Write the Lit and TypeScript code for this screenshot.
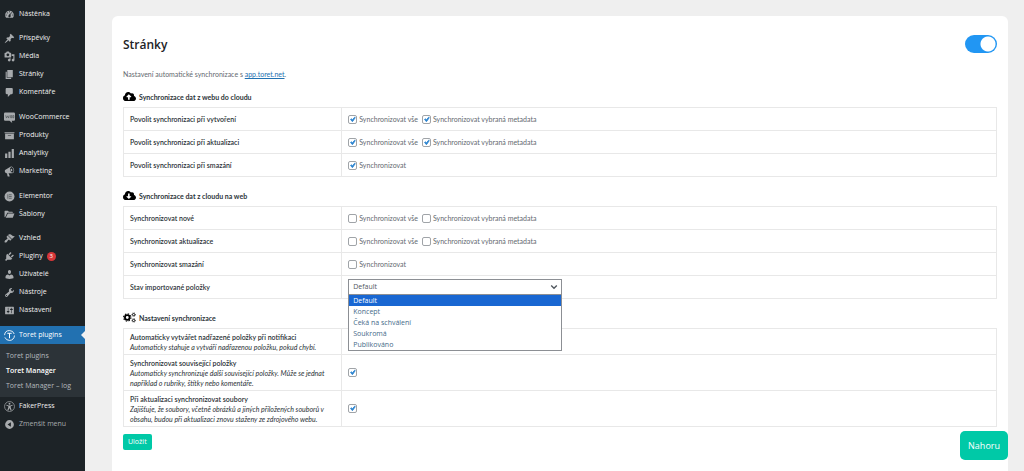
import { LitElement, html, css, svg, nothing } from "lit";
import { customElement, property } from "lit/decorators.js";
import { classMap } from "lit/directives/class-map.js";

const p = (d: string) => svg`<path fill-rule="evenodd" d=${d}></path>`;

const ICONS: Record<string, unknown> = {
  dashboard: p("M3.76 16h12.48c1.1-1.37 1.76-3.11 1.76-5 0-4.42-3.58-8-8-8s-8 3.58-8 8c0 1.89.66 3.63 1.76 5zM10 4c.55 0 1 .45 1 1s-.45 1-1 1-1-.45-1-1 .45-1 1-1zM6 6c.55 0 1 .45 1 1s-.45 1-1 1-1-.45-1-1 .45-1 1-1zm8 0c.55 0 1 .45 1 1s-.45 1-1 1-1-.45-1-1 .45-1 1-1zm-5.37 5.55L12 7v6c0 1.1-.9 2-2 2s-2-.9-2-2c0-.57.24-1.08.63-1.45zM4 10c.55 0 1 .45 1 1s-.45 1-1 1-1-.45-1-1 .45-1 1-1zm12 0c.55 0 1 .45 1 1s-.45 1-1 1-1-.45-1-1 .45-1 1-1z"),
  post: p("M10.44 3.02l1.82-1.82 6.36 6.35-1.83 1.82c-1.05-.68-2.48-.57-3.41.36l-.75.75c-.92.93-1.04 2.35-.35 3.41l-1.83 1.82-2.41-2.41-2.8 2.79c-.42.42-3.38 2.71-3.8 2.29s1.86-3.39 2.28-3.81l2.79-2.79L4.1 9.36l1.83-1.82c1.05.69 2.48.57 3.4-.36l.75-.75c.93-.92 1.05-2.35.36-3.41z"),
  media: p("M13 11V4c0-.55-.45-1-1-1h-1.67L9 1H5L3.67 3H2c-.55 0-1 .45-1 1v7c0 .55.45 1 1 1h10c.55 0 1-.45 1-1zM7 4.5c1.38 0 2.5 1.12 2.5 2.5S8.38 9.5 7 9.5 4.5 8.38 4.5 7 5.62 4.5 7 4.5zM14 6h5v10.5c0 1.38-1.12 2.5-2.5 2.5S14 17.88 14 16.5s1.12-2.5 2.5-2.5c.17 0 .34.02.5.05V9h-3V6zm-4 8.05V13h2v3.5c0 1.38-1.12 2.5-2.5 2.5S7 17.88 7 16.5 8.12 14 9.5 14c.17 0 .34.02.5.05z"),
  page: p("M6 15V2h10v13H6zm-1 1h8v2H3V5h2v11z"),
  comments: p("M5 2h9c1.1 0 2 .9 2 2v7c0 1.1-.9 2-2 2h-2l-5 5v-5H5c-1.1 0-2-.9-2-2V4c0-1.1.9-2 2-2z"),
  woo: svg`<path d="M2 1h16q2 0 2 2v11q0 2-2 2h-4l1 4-5-4H2q-2 0-2-2V3q0-2 2-2z"></path>
    <path d="M3 6l1.500 5L6.500 7l2 4L9.500 6M12 6.500h2v4h-2zM16 6.500h2v4h-2z" fill="none" stroke="#1d2327" stroke-width="1.200" opacity=".6"></path>`,
  archive: p("M19 4v2H1V4h18zM2 7h16v10H2V7zm11 3V9H7v1h6z"),
  chart: p("M18 18V2h-4v16h4zm-6 0V7H8v11h4zm-6 0v-8H2v8h4z"),
  megaphone: p("M18.15 5.94c.46 1.62.38 3.22-.02 4.48-.42 1.28-1.26 2.18-2.3 2.48-.16.06-.26.06-.4.06-.06.02-.12.02-.18.02-.06.02-.14.02-.22.02h-6.8l2.22 5.5c.02.14-.06.26-.14.34-.08.1-.24.16-.34.16H6.95c-.1 0-.26-.06-.34-.16-.08-.08-.16-.2-.14-.34l-1-5.5H4.25l-.02-.02c-.5.06-1.08-.18-1.54-.62s-.88-1.08-1.06-1.88c-.24-.8-.2-1.56-.02-2.2.18-.62.58-1.08 1.06-1.3l.02-.02 9-5.4c.1-.06.18-.1.24-.16.06-.04.14-.08.24-.12.16-.08.28-.12.5-.18 1.04-.3 2.24.1 3.22.98s1.84 2.24 2.26 3.86zm-2.580 5.980h-.02c.4-.1.74-.34 1.040-.7.58-.7.86-1.760.86-3.040 0-.64-.1-1.300-.28-1.980-.34-1.360-1.020-2.500-1.780-3.240s-1.680-1.100-2.460-.88c-.82.22-1.400.96-1.700 2-.32 1.040-.28 2.360.06 3.720.38 1.360 1 2.500 1.800 3.240.78.74 1.620 1.100 2.480.88zm-2.540-7.080c.22-.04.42-.02.62.04.38.16.76.48 1.020 1s.42 1.200.42 1.780c0 .3-.04.56-.12.8-.18.48-.44.84-.86.94-.34.1-.8-.06-1.140-.4s-.64-.86-.78-1.500c-.18-.62-.12-1.240.02-1.720s.48-.84.82-.94z"),
  elementor: svg`<circle cx="10" cy="10" r="9"></circle><path d="M7 6v8M9 6.800h5M9 10h5M9 13.200h5" fill="none" stroke="#1d2327" stroke-width="1.500" opacity=".6"></path>`,
  folder: p("M1 4q0-1 1-1h5l2 2h6q1 0 1 1v1H6L2.500 14 1 15zM7 8h12l-3 8H3z"),
  appearance: p("M14.48 11.06L7.41 3.99l1.5-1.5c.5-.56 2.3-.47 3.51.32 1.21.8 1.43 1.28 2.91 2.1 1.18.64 2.45 1.26 4.45.85zm-.71.71L6.7 4.7 4.93 6.47c-.39.39-.39 1.02 0 1.41l1.06 1.06c.39.39.39 1.03 0 1.42-.6.6-1.43 1.11-2.21 1.69-.35.26-.7.53-1.01.84C1.43 14.23.4 16.08 1.4 17.07c.99 1 2.84-.03 4.18-1.36.31-.31.58-.66.85-1.02.57-.78 1.08-1.61 1.69-2.21.39-.39 1.02-.39 1.41 0l1.06 1.06c.39.39 1.02.39 1.41 0z"),
  plugins: p("M13.11 4.36L9.87 7.6 8 5.73l3.24-3.24c.35-.34 1.05-.2 1.56.32.52.51.66 1.21.31 1.55zm-8 1.77l.91-1.12 9.01 9.01-1.19.84c-.71.71-2.63 1.16-3.82 1.16H6.14L4.9 17.26c-.59.59-1.54.59-2.12 0-.59-.58-.59-1.53 0-2.12l1.24-1.24v-3.88c0-1.13.4-3.19 1.09-3.89zm7.26 3.97l3.24-3.24c.34-.35 1.04-.21 1.55.31.52.51.66 1.21.31 1.55l-3.24 3.25z"),
  users: p("M10 9.25c-2.27 0-2.73-3.44-2.73-3.44C7 4.02 7.82 2 9.97 2c2.16 0 2.98 2.02 2.71 3.81 0 0-.41 3.44-2.68 3.44zm0 2.57L12.72 10c2.39 0 4.52 2.33 4.52 4.53v2.49s-3.65 1.13-7.24 1.13c-3.65 0-7.24-1.13-7.24-1.13v-2.49c0-2.25 1.94-4.48 4.47-4.48z"),
  tools: p("M16.68 9.77c-1.34 1.34-3.3 1.67-4.95.99l-5.41 6.52c-.99.99-2.59.99-3.58 0s-.99-2.59 0-3.57l6.52-5.42c-.68-1.65-.35-3.61.99-4.95 1.28-1.28 3.12-1.62 4.72-1.06l-2.89 2.89 2.82 2.82 2.86-2.87c.53 1.58.18 3.39-1.08 4.65zM3.81 16.21c.4.39 1.04.39 1.43 0 .4-.4.4-1.04 0-1.43-.39-.4-1.03-.4-1.43 0-.39.39-.39 1.03 0 1.43z"),
  settings: p("M18 16V4c0-.55-.45-1-1-1H3c-.55 0-1 .45-1 1v12c0 .55.45 1 1 1h14c.55 0 1-.45 1-1zM8 11h1c.55 0 1 .45 1 1s-.45 1-1 1H8v1.5c0 .28-.22.5-.5.5s-.5-.22-.5-.5V13H6c-.55 0-1-.45-1-1s.45-1 1-1h1V5.500c0-.28.22-.5.5-.5s.5.22.5.5V11zm5-2h-1c-.55 0-1-.45-1-1s.45-1 1-1h1V5.500c0-.28.22-.5.5-.5s.5.22.5.5V7h1c.55 0 1 .45 1 1s-.45 1-1 1h-1v5.500c0 .28-.22.5-.5.5s-.5-.22-.5-.5V9z"),
  toret: svg`<circle cx="10" cy="10" r="9" fill="none" stroke="currentColor" stroke-width="1.600" stroke-dasharray="24 4.270"></circle><path d="M6 6h8M10 6v9" fill="none" stroke="currentColor" stroke-width="1.800"></path>`,
  access: svg`<circle cx="10" cy="10" r="9" fill="none" stroke="currentColor" stroke-width="1.300"></circle><circle cx="10" cy="4.900" r="1.700"></circle><path d="M4.500 7l3.700 1h3.600l3.700-1 .4 1.300-3.700 1.300v2.400l1.800 5-1.500.6L10.200 13h-.4l-2.300 4.600-1.500-.6 1.800-5V9.600L4.100 8.300z"></path>`,
  collapse: p("M10 2a8 8 0 1 0 0 16 8 8 0 1 0 0-16zM12.500 6v8L6.500 10z"),
};

const CLOUD = "M537.600 226.600c4.100-10.700 6.400-22.400 6.400-34.600 0-53-43-96-96-96-19.700 0-38.100 6-53.300 16.200C367 64.200 315.300 32 256 32c-88.400 0-160 71.600-160 160 0 2.700.1 5.400.2 8.100C40.200 219.800 0 273.200 0 336c0 79.500 64.500 144 144 144h368c70.700 0 128-57.300 128-128 0-61.900-44-113.600-102.400-125.400z";
const gear = (x: number, y: number, r: number, w: number, teeth: number, tooth: number) => svg`
  <circle cx=${x} cy=${y} r=${r} stroke-width=${w}></circle>
  <circle cx=${x} cy=${y} r=${r + w / 2 + tooth / 2 - 2} stroke-width=${tooth} pathLength=${teeth * 2} stroke-dasharray="1 1"></circle>`;
const HEAD_ICONS: Record<string, unknown> = {
  up: svg`<path fill-rule="evenodd" d=${CLOUD + "M393.400 288H328v112c0 8.800-7.200 16-16 16h-48c-8.800 0-16-7.200-16-16V288h-65.400c-14.300 0-21.400-17.200-11.300-27.300l105.400-105.400c6.200-6.200 16.400-6.200 22.600 0l105.400 105.400c10.100 10.100 2.900 27.300-11.300 27.300z"}></path>`,
  down: svg`<path fill-rule="evenodd" d=${CLOUD + "M171.300 315.300c-10.100-10.100-3-27.300 11.300-27.300H248V176c0-8.800 7.200-16 16-16h48c8.800 0 16 7.200 16 16v112h65.400c14.300 0 21.400 17.200 11.300 27.300L299.300 420.700c-6.200 6.200-16.400 6.200-22.600 0z"}></path>`,
  cogs: svg`<g fill="none" stroke="#000">${gear(210, 256, 115, 90, 8, 50)}${gear(525, 115, 56, 42, 7, 32)}${gear(525, 400, 56, 42, 7, 32)}</g>`,
};

type Item = { icon: string; label: string; badge?: number; active?: boolean; sub?: string[]; quiet?: boolean };

const MENU: Item[][] = [
  [{ icon: "dashboard", label: "Nástěnka" }],
  [
    { icon: "post", label: "Příspěvky" },
    { icon: "media", label: "Média" },
    { icon: "page", label: "Stránky" },
    { icon: "comments", label: "Komentáře" },
  ],
  [
    { icon: "woo", label: "WooCommerce" },
    { icon: "archive", label: "Produkty" },
    { icon: "chart", label: "Analytiky" },
    { icon: "megaphone", label: "Marketing" },
  ],
  [
    { icon: "elementor", label: "Elementor" },
    { icon: "folder", label: "Šablony" },
  ],
  [
    { icon: "appearance", label: "Vzhled" },
    { icon: "plugins", label: "Pluginy", badge: 3 },
    { icon: "users", label: "Uživatelé" },
    { icon: "tools", label: "Nástroje" },
    { icon: "settings", label: "Nastavení" },
  ],
  [
    { icon: "toret", label: "Toret plugins", active: true, sub: ["Toret plugins", "Toret Manager", "Toret Manager – log"] },
    { icon: "access", label: "FakerPress" },
    { icon: "collapse", label: "Zmenšit menu", quiet: true },
  ],
];

@customElement("admin-menu")
export class AdminMenu extends LitElement {
  static styles = css`
    :host {
      display: block;
      background: #1d2327;
      color: #f0f0f1;
      font: 7px/18px "Open Sans", "Noto Sans", sans-serif;
    }
    nav { padding-top: 5px; }
    .group { list-style: none; margin: 0 0 6px; padding: 0; }
    .group.wide { margin-bottom: 7px; }
    .link {
      position: relative;
      display: flex;
      align-items: center;
      gap: 4px;
      height: 18px;
      padding-left: 4px;
      color: inherit;
      text-decoration: none;
      white-space: nowrap;
    }
    .icon { width: 11px; height: 11px; fill: currentColor; color: #a7aaad; flex: none; }
    .active { background: #2271b1; color: #fff; }
    .active .icon { color: #fff; }
    .active::after {
      content: "";
      position: absolute;
      right: 0;
      top: 5px;
      border: 4px solid transparent;
      border-left: 0;
      border-right-color: #f0f0f1;
    }
    .quiet { color: #a7aaad; }
    .badge {
      min-width: 9px;
      height: 9px;
      border-radius: 5px;
      background: #d63638;
      color: #fff;
      font-size: 6px;
      line-height: 9px;
      text-align: center;
    }
    .sub { list-style: none; margin: 0; padding: 4px 0; background: #2c3338; line-height: 15px; }
    .sublink { display: block; padding-left: 6px; color: #b4b9be; text-decoration: none; white-space: nowrap; }
    .current { color: #fff; font-weight: 600; }
  `;

  render() {
    return html`<nav aria-label="Menu">
      ${MENU.map(
        (group, i) => html`<ul class=${classMap({ group: true, wide: i === 1 || i === 2 || i === 4 })}>
          ${group.map(
            (it) => html`<li>
              <a class=${classMap({ link: true, active: !!it.active, quiet: !!it.quiet })} href="#">
                <svg class="icon" viewBox="0 0 20 20" aria-hidden="true">${ICONS[it.icon]}</svg>
                <span>${it.label}</span>
                ${it.badge ? html`<span class="badge">${it.badge}</span>` : nothing}
              </a>
              ${it.sub
                ? html`<ul class="sub">
                    ${it.sub.map((s, n) => html`<li><a class=${classMap({ sublink: true, current: n === 1 })} href="#">${s}</a></li>`)}
                  </ul>`
                : nothing}
            </li>`
          )}
        </ul>`
      )}
    </nav>`;
  }
}

type Row = { label: string; note?: string; checks?: string[]; checked?: boolean; select?: boolean };

const OPTIONS = ["Default", "Koncept", "Čeká na schválení", "Soukromá", "Publikováno"];
const ALL = "Synchronizovat vše";
const META = "Synchronizovat vybraná metadata";

const SECTIONS: { icon: string; title: string; rows: Row[] }[] = [
  {
    icon: "up",
    title: "Synchronizace dat z webu do cloudu",
    rows: [
      { label: "Povolit synchronizaci při vytvoření", checks: [ALL, META], checked: true },
      { label: "Povolit synchronizaci při aktualizaci", checks: [ALL, META], checked: true },
      { label: "Povolit synchronizaci při smazání", checks: ["Synchronizovat"], checked: true },
    ],
  },
  {
    icon: "down",
    title: "Synchronizace dat z cloudu na web",
    rows: [
      { label: "Synchronizovat nové", checks: [ALL, META] },
      { label: "Synchronizovat aktualizace", checks: [ALL, META] },
      { label: "Synchronizovat smazání", checks: ["Synchronizovat"] },
      { label: "Stav importované položky", select: true },
    ],
  },
  {
    icon: "cogs",
    title: "Nastavení synchronizace",
    rows: [
      { label: "Automaticky vytvářet nadřazené položky při notifikaci", note: "Automaticky stahuje a vytváří nadřazenou položku, pokud chybí.", checks: [""] },
      { label: "Synchronizovat související položky", note: "Automaticky synchronizuje další související položky. Může se jednat například o rubriky, štítky nebo komentáře.", checks: [""], checked: true },
      { label: "Při aktualizaci synchronizovat soubory", note: "Zajišťuje, že soubory, včetně obrázků a jiných přiložených souborů v obsahu, budou při aktualizaci znovu staženy ze zdrojového webu.", checks: [""], checked: true },
    ],
  },
];

@customElement("sync-section")
export class SyncSection extends LitElement {
  @property({ attribute: false }) section!: (typeof SECTIONS)[number];

  static styles = css`
    :host { display: block; }
    .head { display: flex; align-items: center; gap: 3px; height: 13px; margin: 0 0 4px; font-size: 7px; font-weight: 700; color: #2c3338; }
    .icon { width: 13px; height: 11px; fill: #000; }
    .table { width: 100%; table-layout: fixed; border-collapse: collapse; }
    .th, .td { height: 22px; padding: 0 6px; border: 1px solid #e8e8e8; text-align: left; vertical-align: middle; }
    .th { width: 25%; box-sizing: border-box; font-weight: 600; color: #2c3338; }
    .tall { padding-top: 3px; padding-bottom: 2px; line-height: 10px; height: auto; }
    .note { display: block; font-weight: 400; font-style: italic; }
    .checks { display: flex; gap: 4px; }
    .check { display: flex; align-items: center; gap: 2px; color: #646970; }
    .box {
      appearance: none;
      box-sizing: border-box;
      width: 9px;
      height: 9px;
      margin: 0;
      border: 1px solid #a0a4a8;
      border-radius: 2px;
      background: #fff center / 9px 9px no-repeat;
    }
    .box:checked {
      background-image: url("data:image/svg+xml,%3Csvg xmlns='http://www.w3.org/2000/svg' viewBox='0 0 20 20'%3E%3Cpath d='M14.830 4.890l1.340.94-5.810 8.380H9.020L5.780 9.670l1.340-1.250 2.570 2.400z' fill='%232f86d0' stroke='%232f86d0' stroke-width='2'/%3E%3C/svg%3E");
    }
    .picker { position: relative; width: 214px; font-family: "Open Sans", sans-serif; }
    .select {
      appearance: none;
      display: block;
      box-sizing: border-box;
      width: 100%;
      height: 16px;
      padding: 0 4px;
      border: 1px solid #8c8f94;
      border-radius: 0;
      color: #50575e;
      font: inherit;
      background: #fff url("data:image/svg+xml,%3Csvg xmlns='http://www.w3.org/2000/svg' viewBox='0 0 10 10'%3E%3Cpath d='M1.500 3l3.500 3.500L8.500 3' fill='none' stroke='%2350575e' stroke-width='1.700'/%3E%3C/svg%3E") right 3px center / 8px 8px no-repeat;
    }
    .list {
      position: absolute;
      z-index: 2;
      top: 100%;
      left: 0;
      right: 0;
      margin: 0;
      padding: 0;
      list-style: none;
      border: 1px solid #8c8f94;
      border-top: 0;
      background: #fff;
      color: #456a89;
      line-height: 11px;
    }
    .option { padding: 0 4px; height: 11px; }
    .selected { background: #1967d2; color: #fff; }
  `;

  private control(row: Row, id: string) {
    if (row.select) {
      return html`<div class="picker">
        <select class="select" id=${id}>${OPTIONS.map((o) => html`<option>${o}</option>`)}</select>
        <ul class="list" role="listbox" aria-label=${row.label}>
          ${OPTIONS.map((o, i) => html`<li role="option" aria-selected=${i === 0} class=${classMap({ option: true, selected: i === 0 })}>${o}</li>`)}
        </ul>
      </div>`;
    }
    return html`<div class="checks">
      ${row.checks!.map((c, i) => html`<label class="check"><input class="box" type="checkbox" id="${id}-${i}" aria-label=${c || row.label} .checked=${!!row.checked} />${c}</label>`)}
    </div>`;
  }

  render() {
    const { icon, title, rows } = this.section;
    return html`<h3 class="head"><svg class="icon" viewBox="0 0 640 512" aria-hidden="true">${HEAD_ICONS[icon]}</svg>${title}</h3>
      <table class="table">
        <tbody>
          ${rows.map((row, i) => {
            const id = `${icon}-${i}`;
            return html`<tr>
              <th scope="row" class=${classMap({ th: true, tall: !!row.note })}>
                <label for=${row.select ? id : `${id}-0`}>${row.label}</label>
                ${row.note ? html`<span class="note">${row.note}</span>` : nothing}
              </th>
              <td class="td">${this.control(row, id)}</td>
            </tr>`;
          })}
        </tbody>
      </table>`;
  }
}

@customElement("app-root")
export class AppRoot extends LitElement {
  static styles = css`
    :host {
      display: grid;
      grid-template-columns: 85px 1fr;
      height: 100vh;
      overflow: hidden;
      background: #efefef;
      color: #3c434a;
      font: 7px/10px Lato, "Open Sans", sans-serif;
    }
    .main { padding: 16px 16px 0 27px; display: flex; }
    .card { flex: 1; min-width: 0; padding: 19px 11px; box-sizing: border-box; background: #fff; border-radius: 6px 6px 0 0; }
    .top { display: flex; justify-content: space-between; align-items: flex-start; }
    .title { margin: 0; font: 600 12px/20px "Open Sans", sans-serif; color: #1d2327; }
    .switch {
      appearance: none;
      width: 32px;
      height: 18px;
      margin: 0;
      border-radius: 9px;
      background: radial-gradient(circle at 23px 9px, #fff 7px, transparent 8px) #2196f3;
    }
    .intro { margin: 14px 0 11px; color: #646970; }
    .link { color: #2271b1; }
    .sections { display: grid; gap: 12px; }
    .save {
      margin-top: 7px;
      height: 16px;
      padding: 0 5px;
      border: 0;
      border-radius: 2px;
      background: #00c9a7;
      color: #fff;
      font: 7px/10px "Open Sans", sans-serif;
    }
    .up {
      position: fixed;
      right: 16px;
      bottom: 11px;
      height: 29px;
      padding: 0 8px;
      border-radius: 5px;
      background: #00c9a7;
      color: #fff;
      font: 9px/29px "Open Sans", sans-serif;
      text-decoration: none;
    }
  `;

  render() {
    return html`<admin-menu></admin-menu>
      <main class="main">
        <form class="card">
          <div class="top">
            <h2 class="title">Stránky</h2>
            <input class="switch" type="checkbox" role="switch" aria-label="Stránky" checked />
          </div>
          <p class="intro">Nastavení automatické synchronizace s <a class="link" href="#">app.toret.net</a>.</p>
          <div class="sections">${SECTIONS.map((s) => html`<sync-section .section=${s}></sync-section>`)}</div>
          <button class="save" type="button">Uložit</button>
        </form>
        <a class="up" href="#">Nahoru</a>
      </main>`;
  }
}
